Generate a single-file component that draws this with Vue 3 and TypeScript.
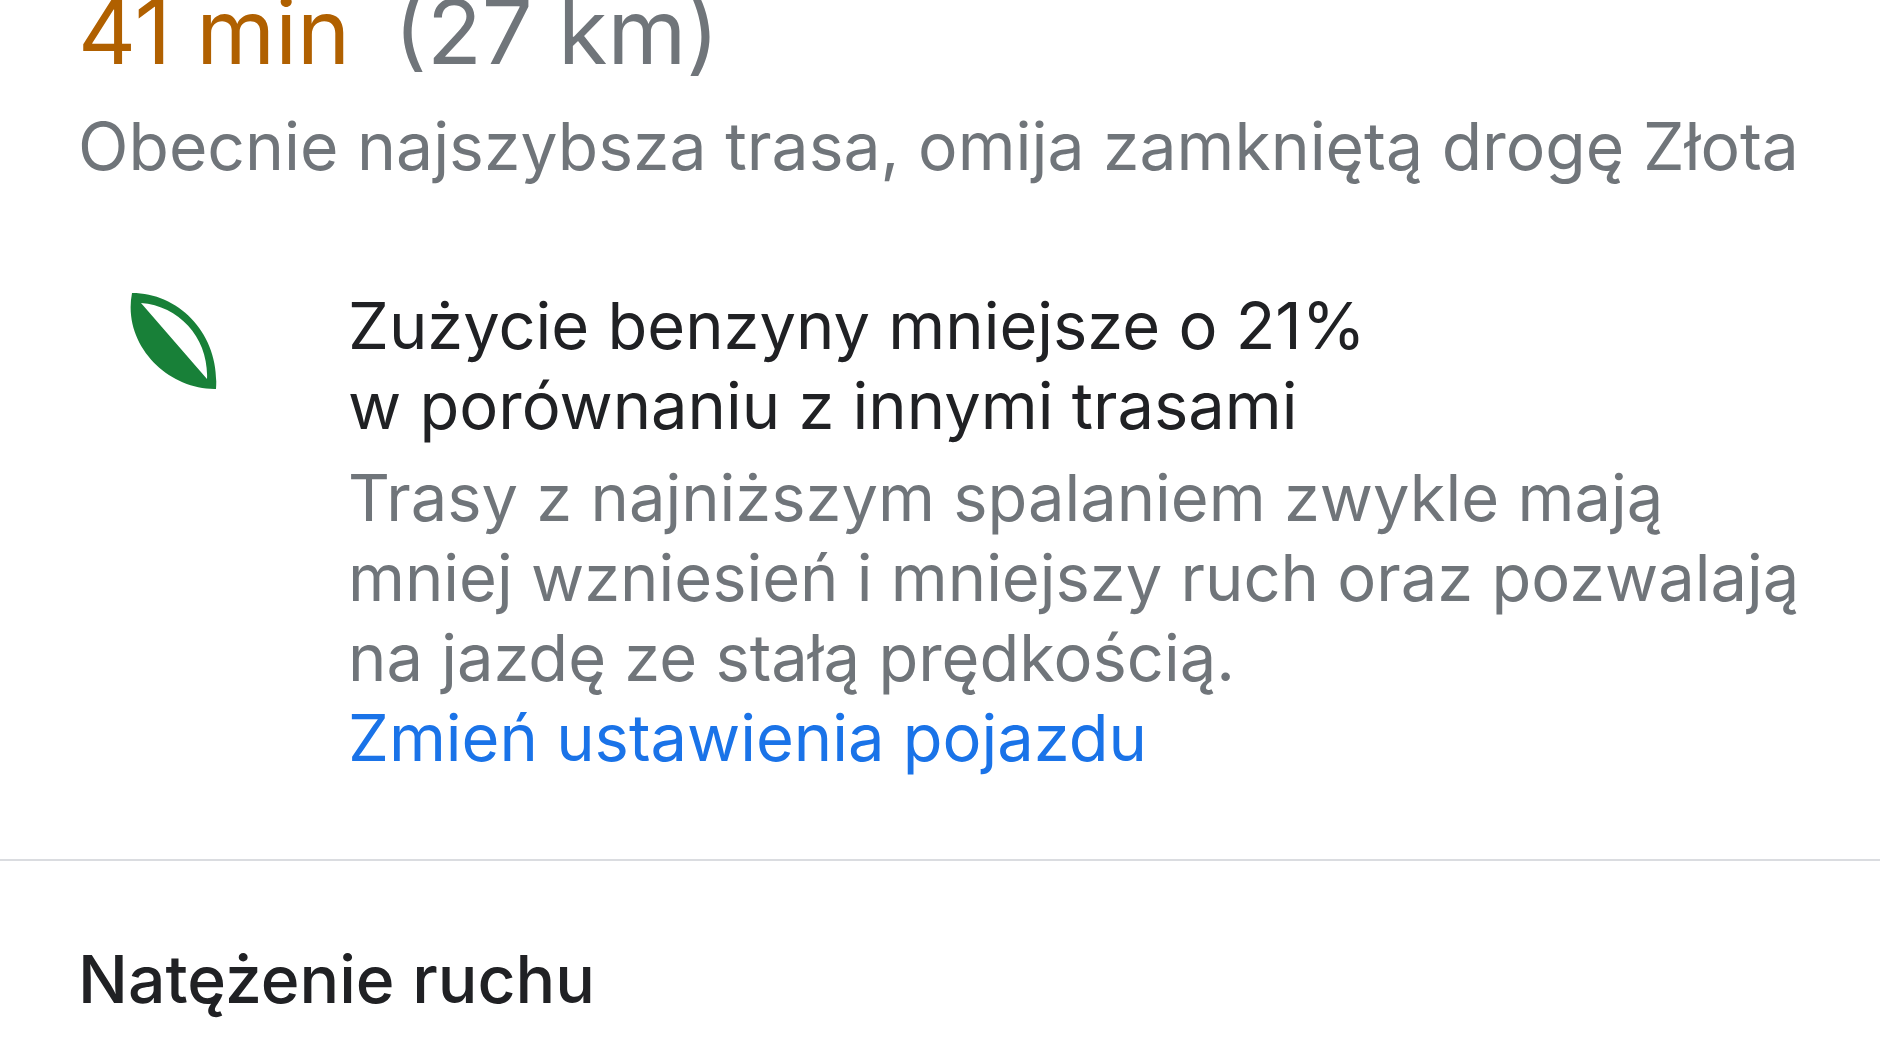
<script setup lang="ts">
interface Route {
  time: string
  distance: string
  note: string
}

const route: Route = {
  time: '41 min',
  distance: '(27 km)',
  note: 'Obecnie najszybsza trasa, omija zamkniętą drogę Złota',
}
const saving: string[] = ['Zużycie benzyny mniejsze o 21%', 'w porównaniu z innymi trasami']
const details: string[] = [
  'Trasy z najniższym spalaniem zwykle mają',
  'mniej wzniesień i mniejszy ruch oraz pozwalają',
  'na jazdę ze stałą prędkością.',
]
</script>

<template>
  <main class="sheet">
    <section class="summary">
      <h1 class="headline">
        <span class="time">{{ route.time }}</span>
        <span class="distance">{{ route.distance }}</span>
      </h1>
      <p class="note">{{ route.note }}</p>
      <div class="eco">
        <svg class="leaf" viewBox="0 0 90 98" aria-hidden="true">
          <path
            fill="#188038"
            fill-rule="evenodd"
            d="M2 0C50 0 90 42 86 96C38 97 -8 52 2 0ZM11 10L77 86C79 46 50 13 11 10Z"
          />
        </svg>
        <div class="eco-text">
          <h2 class="saving"><span v-for="line in saving" :key="line" class="line">{{ line }}</span></h2>
          <p class="details"><span v-for="line in details" :key="line" class="line">{{ line }}</span></p>
          <a class="settings" href="#">Zmień ustawienia pojazdu</a>
        </div>
      </div>
    </section>
    <section class="traffic">
      <h2 class="traffic-title">Natężenie ruchu</h2>
    </section>
  </main>
</template>

<style>
body {
  background: #fff;
  overflow: hidden;
}
</style>

<style scoped>
.sheet {
  font-family: Inter, "Liberation Sans", sans-serif;
  font-size: 66px;
  line-height: 80px;
  color: #202124;
}
h1, h2, p {
  margin: 0;
  font-weight: 400;
  font-size: inherit;
}
.summary {
  padding: 0 78px 81px;
  border-bottom: 2px solid #dadce0;
}
.headline {
  display: flex;
  gap: 44px;
  font-size: 90px;
  line-height: 104px;
  margin-top: -20px;
}
.time {
  color: #b06000;
}
.distance,
.note,
.details {
  color: #70757a;
}
.note,
.line {
  white-space: nowrap;
}
.note {
  margin-top: 22px;
}
.eco {
  display: flex;
  margin-top: 100px;
}
.leaf {
  flex: none;
  width: 90px;
  height: 98px;
  margin: 7px 128px 0 52px;
}
.eco-text {
  font-size: 65px;
}
.line,
.settings {
  display: block;
}
.details {
  margin-top: 12px;
}
.settings {
  color: #1a73e8;
  text-decoration: none;
}
.traffic {
  padding: 78px 78px 0;
}
.traffic-title {
  font-weight: 500;
}
</style>
